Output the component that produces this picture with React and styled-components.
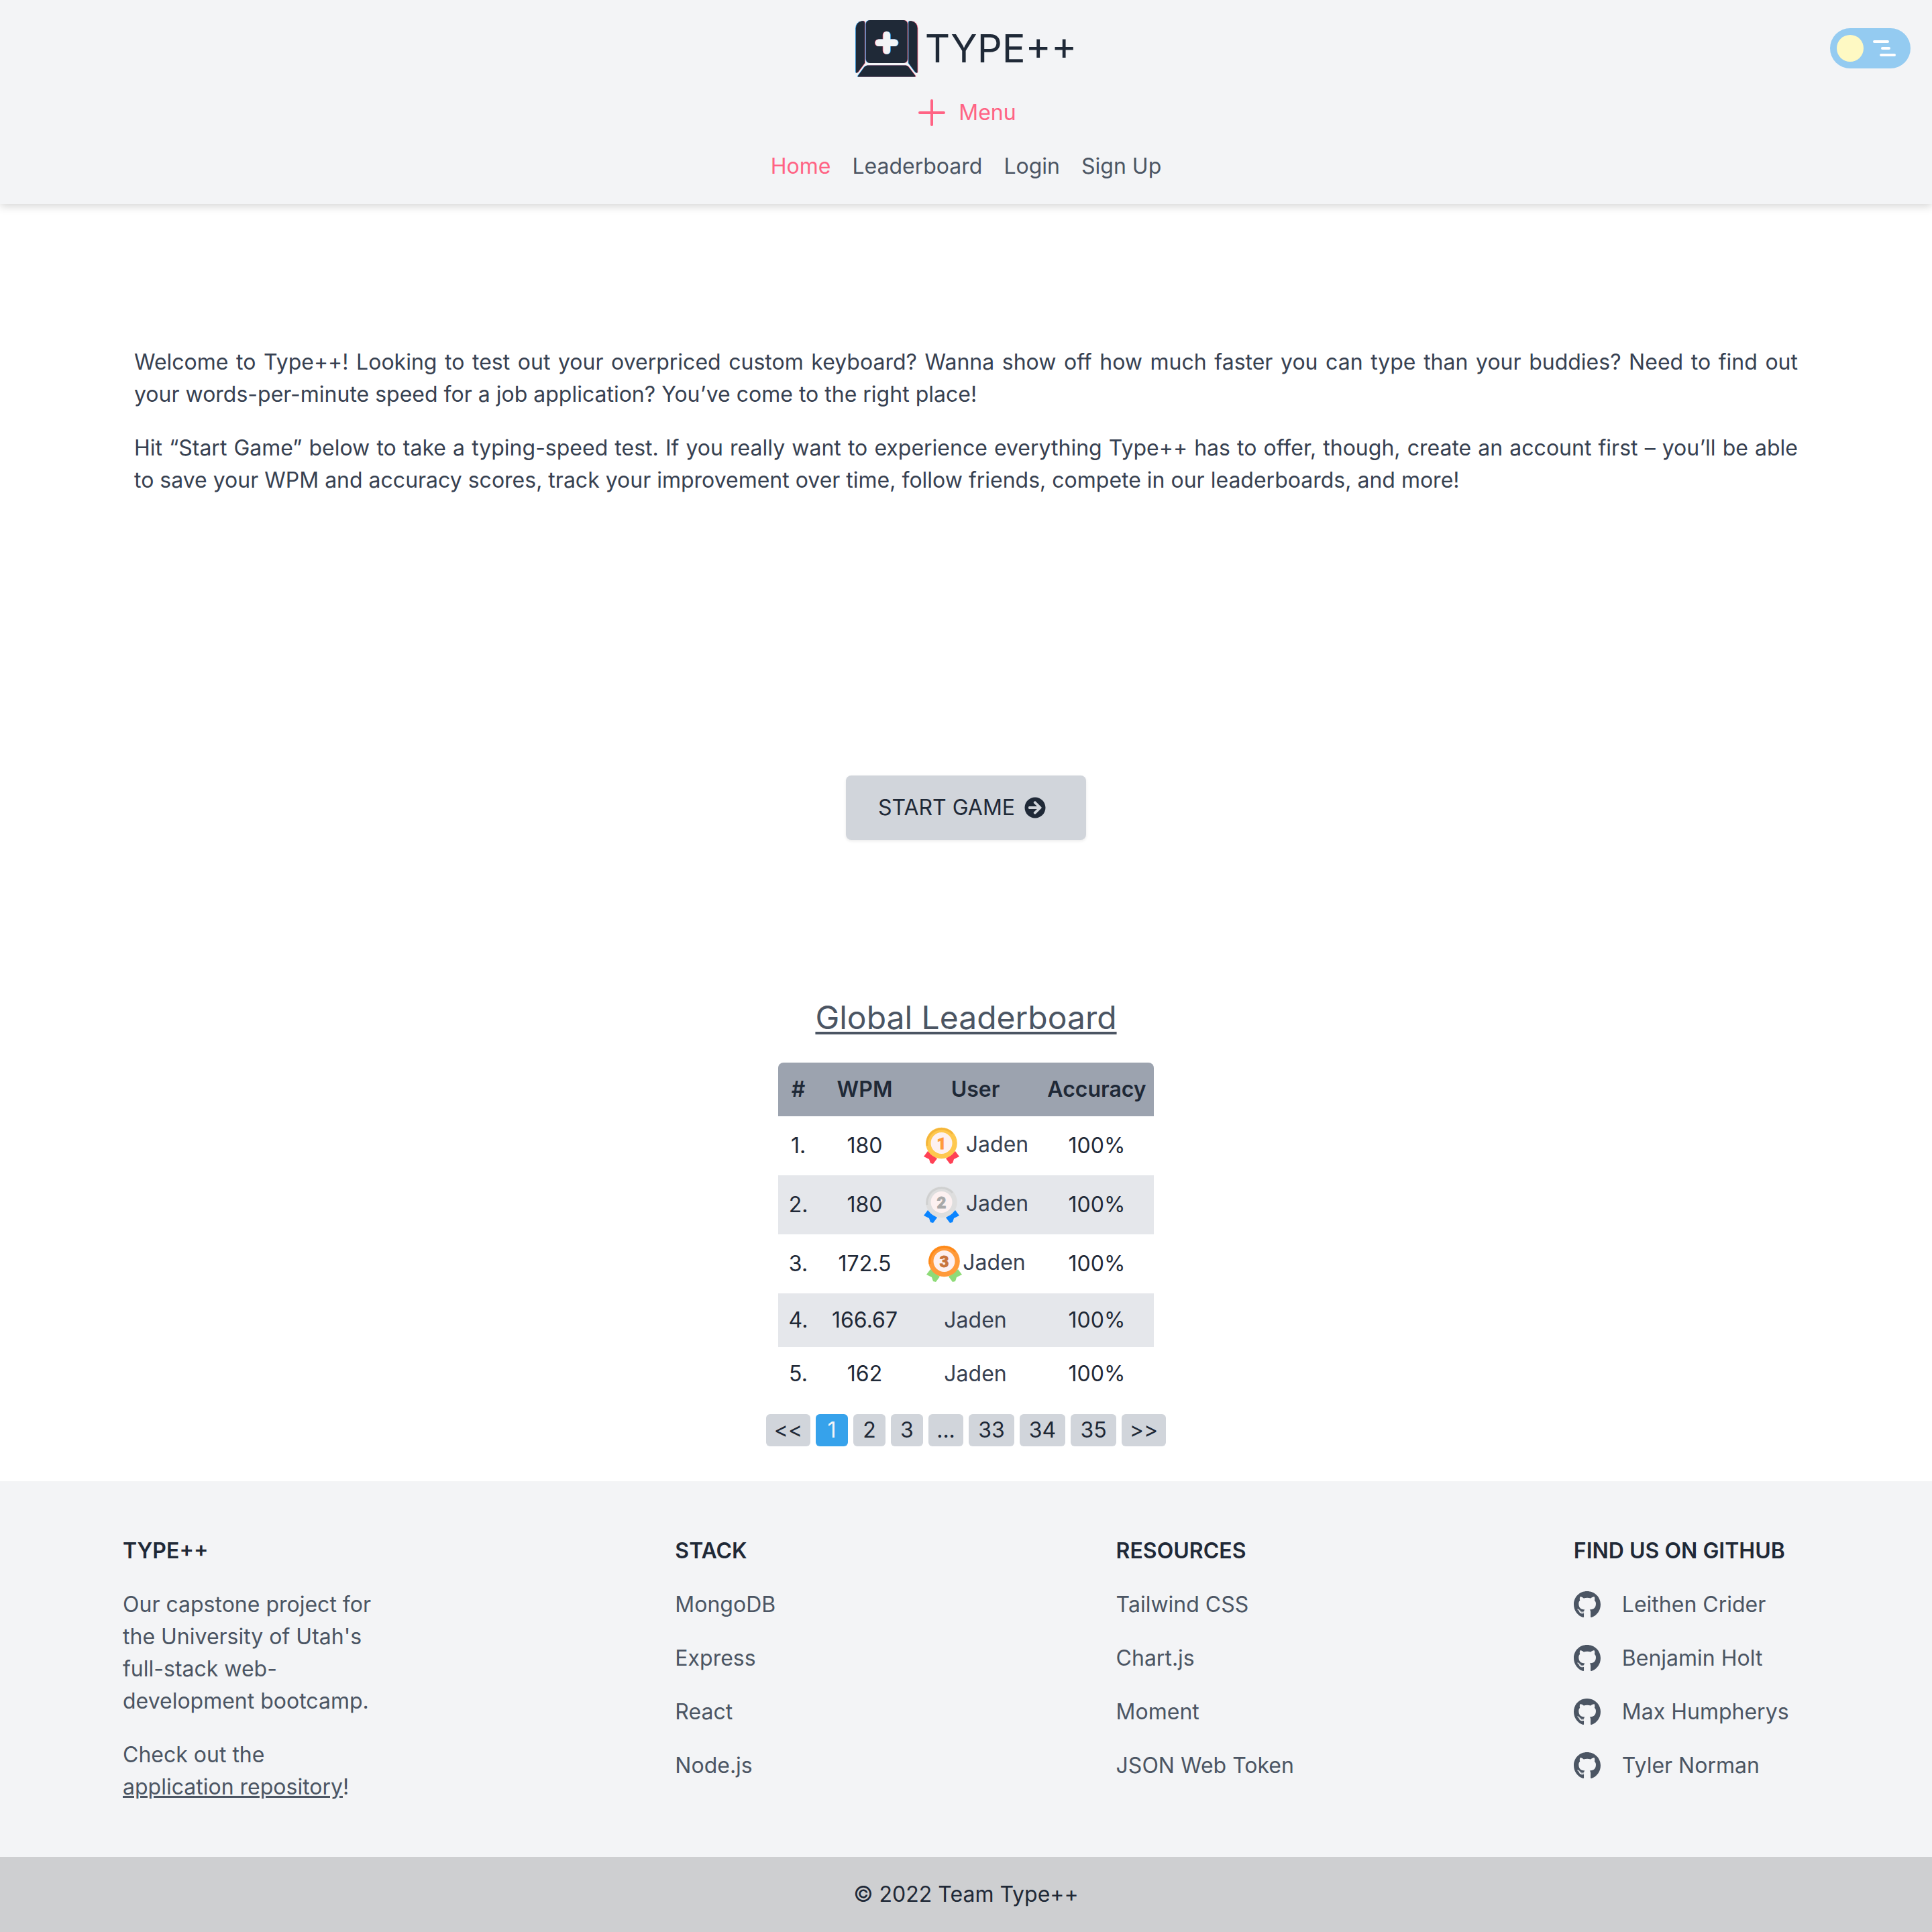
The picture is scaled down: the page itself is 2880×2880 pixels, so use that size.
import React, { useState } from 'react';
import styled, { createGlobalStyle } from 'styled-components';
import { FaGithub, FaArrowCircleRight } from 'react-icons/fa';

const colors = {
  panel: '#f3f4f6',
  stripe: '#e5e7eb',
  button: '#d1d5db',
  tableHead: '#9ca3af',
  muted: '#4b5563',
  body: '#374151',
  dark: '#1f2937',
  pink: '#ff6384',
  blue: '#36a2eb',
};

const GlobalStyle = createGlobalStyle`
  *, *::before, *::after { box-sizing: border-box; }
  body {
    margin: 0;
    background: #fff;
    color: ${colors.dark};
    font-family: Inter, "Noto Sans", sans-serif;
    font-size: 32px;
    line-height: 48px;
  }
  h1, h2, h3, p, ul { margin: 0; padding: 0; }
  ul { list-style: none; }
  a { color: inherit; text-decoration: none; }
  button { font: inherit; color: inherit; border: 0; cursor: pointer; }
`;

/* ---------- header ---------- */

const Header = styled.header`
  position: relative;
  display: flex;
  flex-direction: column;
  align-items: center;
  padding: 28px 32px 32px;
  background: ${colors.panel};
  box-shadow: 0 4px 12px rgba(0, 0, 0, 0.16);
`;

const Brand = styled.a`
  display: flex;
  align-items: center;
  gap: 10px;
  height: 88px;
  font-size: 58px;
  margin-bottom: 28px;
`;

const MenuButton = styled.button`
  display: flex;
  align-items: center;
  gap: 16px;
  padding: 0;
  margin-bottom: 32px;
  background: none;
  color: ${colors.pink};
`;

const NavList = styled.ul`
  display: flex;
  gap: 32px;
`;

const NavLink = styled.a`
  color: ${(p) => (p.$active ? colors.pink : colors.muted)};
`;

const ThemeToggle = styled.label`
  position: absolute;
  top: 42px;
  right: 32px;
  display: flex;
  align-items: center;
  gap: 14px;
  width: 120px;
  height: 60px;
  padding: 0 10px;
  border-radius: 30px;
  background: #94cbf1;
  cursor: pointer;
`;

const ThemeInput = styled.input`
  appearance: none;
  width: 40px;
  height: 40px;
  margin: 0;
  border-radius: 50%;
  background: #fef9c3;
  cursor: pointer;
`;

function KeycapLogo() {
  const key = (
    <>
      <path d="M10 2.3H12Q14 2.3 14 5V65L4 78.6Q.8 81 .8 78V13Q1.5 4 10 2.3Z" />
      <path d="M83.4 2.3H81.4Q79.4 2.3 79.4 5V65L89.4 78.6Q92.6 81 92.6 78V13Q91.9 4 83.4 2.3Z" />
      <rect x="15.8" y="1" width="62" height="64" rx="6" />
      <path d="M18 68.4H75.5Q78 68.4 79.5 71L89.5 84Q90 85.6 88.5 85.6H4.7Q3 85.6 4 84L13.5 71Q15.5 68.4 18 68.4Z" />
    </>
  );
  const plus = <path d="M46.8 23V46.5M35 34.8H58.5" strokeWidth="10.5" strokeLinecap="round" />;
  return (
    <svg width="94" height="86" viewBox="0 0 94 86" aria-hidden="true">
      <g fill={colors.blue} transform="translate(-.8 0)">{key}</g>
      <g fill={colors.pink} transform="translate(.8 0)">{key}</g>
      <g fill={colors.dark}>{key}</g>
      <g stroke={colors.pink} transform="translate(-.8 0)">{plus}</g>
      <g stroke={colors.blue} transform="translate(.8 0)">{plus}</g>
      <g stroke={colors.panel}>{plus}</g>
    </svg>
  );
}

function PlusIcon() {
  return (
    <svg width="48" height="48" viewBox="0 0 48 48" fill="none" aria-hidden="true">
      <path d="M24 6V42M6 24H42" stroke="currentColor" strokeWidth="4" strokeLinecap="round" />
    </svg>
  );
}

function Clouds() {
  return (
    <svg width="34" height="24" viewBox="0 0 34 24" fill="#fff" aria-hidden="true">
      <rect x="0" y="0" width="24" height="4" rx="2" />
      <rect x="12" y="10" width="14" height="4" rx="2" />
      <rect x="10" y="20" width="24" height="4" rx="2" />
    </svg>
  );
}

/* ---------- main ---------- */

const Main = styled.main`
  display: flex;
  flex-direction: column;
  align-items: center;
  padding: 212px 200px 52px;
`;

const Intro = styled.section`
  display: grid;
  gap: 32px;
  color: ${colors.body};
  text-align: justify;
`;

const StartButton = styled.button`
  display: flex;
  align-items: center;
  gap: 14px;
  height: 96px;
  margin: 416px 0 228px;
  padding: 0 60px 0 48px;
  border-radius: 8px;
  background: ${colors.button};
  box-shadow: 0 2px 4px rgba(0, 0, 0, 0.08);
`;

const BoardTitle = styled.h2`
  margin-bottom: 30px;
  font-size: 48px;
  font-weight: 400;
  line-height: 74px;
  color: ${colors.muted};
  text-decoration: underline;
  text-decoration-thickness: 4px;
  text-underline-offset: 4px;
  text-decoration-skip-ink: none;
`;

const Board = styled.table`
  width: 560px;
  table-layout: fixed;
  border-collapse: collapse;
  margin-bottom: 20px;
  text-align: center;
`;

const HeadCell = styled.th`
  width: ${(p) => p.$width}px;
  padding: 16px 0;
  font-weight: 600;
  background: ${colors.tableHead};
  &:first-child { border-top-left-radius: 8px; }
  &:last-child { border-top-right-radius: 8px; }
`;

const Row = styled.tr`
  &:nth-child(even) { background: ${colors.stripe}; }
`;

const Cell = styled.td`
  padding: 16px 0;
`;

const UserLink = styled.a`
  color: ${colors.body};
`;

const MedalIcon = styled.svg`
  width: 56px;
  height: 56px;
  vertical-align: middle;
  font: 900 24px Roboto, sans-serif;
  text-anchor: middle;
`;

const Pages = styled.nav`
  display: flex;
  gap: 8px;
`;

const pageWidths = { one: 48, dots: 52, arrows: 66, two: 68 };

const PageButton = styled.button`
  width: ${(p) => pageWidths[p.$size]}px;
  height: 48px;
  padding: 0;
  border-radius: 6px;
  background: ${(p) => (p.$current ? colors.blue : colors.button)};
  color: ${(p) => (p.$current ? colors.panel : colors.dark)};
`;

const medals = {
  1: { ring: '#fec84f', shade: '#f4b53a', ribbon: '#ff4155', ink: '#ff9a38' },
  2: { ring: '#dedede', shade: '#cfd0d0', ribbon: '#0a84ff', ink: '#a9a9a9' },
  3: { ring: '#ff9a3a', shade: '#ff8a18', ribbon: '#8edb78', ink: '#c8743c' },
};

function Medal({ place }) {
  const m = medals[place];
  return (
    <MedalIcon viewBox="0 0 56 56" role="img">
      <g fill={m.ribbon}>
        <path d="M8 36L22 47L16 55L12 54L10 48L2 44Z" />
        <path d="M49 36L35 47L41 55L45 54L47 48L55 44Z" />
      </g>
      <circle cx="28.5" cy="24" r="23.3" fill={m.ring} />
      <path d="M7 28A22 22 0 0 1 45 10" fill="none" stroke={m.shade} strokeWidth="3" />
      <circle cx="28.5" cy="24" r="16" fill="#fdf1f1" />
      <text x="28.5" y="33" fill={m.ink} stroke={m.ink} strokeWidth="0.8">{place}</text>
    </MedalIcon>
  );
}

/* ---------- footer ---------- */

const FooterGrid = styled.div`
  display: grid;
  grid-template-columns: 823fr 657fr 682fr 326fr;
  padding: 80px 208px 80px 183px;
  background: ${colors.panel};
  color: ${colors.muted};
`;

const FooterColumn = styled.section`
  display: flex;
  flex-direction: column;
  gap: 32px;
`;

const FooterHeading = styled.h3`
  font-size: 32px;
  font-weight: 600;
  color: ${colors.dark};
  white-space: nowrap;
`;

const FooterText = styled.p`
  max-width: 376px;
`;

const InlineLink = styled.a`
  text-decoration: underline;
`;

const FooterList = styled.ul`
  display: grid;
  gap: 32px;
`;

const GithubLink = styled.a`
  display: flex;
  align-items: center;
  gap: 32px;
  white-space: nowrap;

  svg {
    width: 40px;
    height: 42px;
  }
`;

const Copyright = styled.div`
  padding: 32px;
  background: #cecfd1;
  text-align: center;
`;

/* ---------- data ---------- */

const navItems = ['Home', 'Leaderboard', 'Login', 'Sign Up'];

const scores = [
  { rank: 1, wpm: '180' },
  { rank: 2, wpm: '180' },
  { rank: 3, wpm: '172.5' },
  { rank: 4, wpm: '166.67' },
  { rank: 5, wpm: '162' },
];

const pages = [
  ['<<', 'arrows'],
  ['1', 'one'],
  ['2', 'one'],
  ['3', 'one'],
  ['...', 'dots'],
  ['33', 'two'],
  ['34', 'two'],
  ['35', 'two'],
  ['>>', 'arrows'],
];

const linkColumns = [
  { title: 'STACK', links: ['MongoDB', 'Express', 'React', 'Node.js'] },
  { title: 'RESOURCES', links: ['Tailwind CSS', 'Chart.js', 'Moment', 'JSON Web Token'] },
];

const team = ['Leithen Crider', 'Benjamin Holt', 'Max Humpherys', 'Tyler Norman'];

export default function App() {
  const [page, setPage] = useState('1');

  return (
    <>
      <GlobalStyle />
      <Header>
        <Brand href="#">
          <KeycapLogo />
          TYPE++
        </Brand>
        <MenuButton type="button">
          <PlusIcon />
          Menu
        </MenuButton>
        <nav>
          <NavList>
            {navItems.map((item) => (
              <li key={item}>
                <NavLink href="#" $active={item === 'Home'}>{item}</NavLink>
              </li>
            ))}
          </NavList>
        </nav>
        <ThemeToggle htmlFor="theme">
          <ThemeInput id="theme" type="checkbox" aria-label="Dark theme" />
          <Clouds />
        </ThemeToggle>
      </Header>

      <Main>
        <Intro>
          <p>
            Welcome to Type++! Looking to test out your overpriced custom keyboard? Wanna show off how
            much faster you can type than your buddies? Need to find out your words-per-minute speed
            for a job application? You’ve come to the right place!
          </p>
          <p>
            Hit “Start Game” below to take a typing-speed test. If you really want to experience
            everything Type++ has to offer, though, create an account first – you’ll be able to save
            your WPM and accuracy scores, track your improvement over time, follow friends, compete in
            our leaderboards, and more!
          </p>
        </Intro>

        <StartButton type="button">
          START GAME
          <FaArrowCircleRight aria-hidden="true" />
        </StartButton>

        <BoardTitle>Global Leaderboard</BoardTitle>
        <Board>
          <thead>
            <tr>
              <HeadCell $width={60}>#</HeadCell>
              <HeadCell $width={138}>WPM</HeadCell>
              <HeadCell $width={192}>User</HeadCell>
              <HeadCell $width={170}>Accuracy</HeadCell>
            </tr>
          </thead>
          <tbody>
            {scores.map(({ rank, wpm }) => (
              <Row key={rank}>
                <Cell>{rank}.</Cell>
                <Cell>{wpm}</Cell>
                <Cell>
                  {rank <= 3 && <Medal place={rank} />}
                  {rank <= 2 && ' '}
                  <UserLink href="#">Jaden</UserLink>
                </Cell>
                <Cell>100%</Cell>
              </Row>
            ))}
          </tbody>
        </Board>

        <Pages>
          {pages.map(([label, size]) => (
            <PageButton
              key={label}
              type="button"
              $size={size}
              $current={label === page}
              onClick={() => size !== 'dots' && size !== 'arrows' && setPage(label)}
            >
              {label}
            </PageButton>
          ))}
        </Pages>
      </Main>

      <footer>
        <FooterGrid>
          <FooterColumn>
            <FooterHeading>TYPE++</FooterHeading>
            <FooterText>
              Our capstone project for the University of Utah's full-stack web-development bootcamp.
            </FooterText>
            <FooterText>
              Check out the <InlineLink href="#">application repository</InlineLink>!
            </FooterText>
          </FooterColumn>
          {linkColumns.map(({ title, links }) => (
            <FooterColumn key={title}>
              <FooterHeading>{title}</FooterHeading>
              <FooterList>
                {links.map((link) => (
                  <li key={link}><a href="#">{link}</a></li>
                ))}
              </FooterList>
            </FooterColumn>
          ))}
          <FooterColumn>
            <FooterHeading>FIND US ON GITHUB</FooterHeading>
            <FooterList>
              {team.map((name) => (
                <li key={name}>
                  <GithubLink href="#">
                    <FaGithub aria-hidden="true" />
                    {name}
                  </GithubLink>
                </li>
              ))}
            </FooterList>
          </FooterColumn>
        </FooterGrid>
        <Copyright>© 2022 Team Type++</Copyright>
      </footer>
    </>
  );
}
